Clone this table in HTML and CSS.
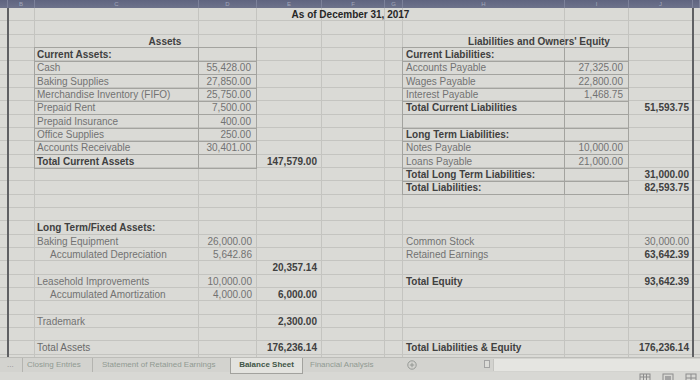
FILE: index.html
```html
<!DOCTYPE html>
<html>
<head>
<meta charset="utf-8">
<title>Balance Sheet</title>
<link rel="stylesheet" href="styles.css">
</head>
<body>
<div class="colhead">
  <span></span><span>B</span><span>C</span><span>D</span><span>E</span><span>F</span><span>G</span><span>H</span><span>I</span><span>J</span><span></span>
</div>
<div class="sheet">
  <div class="row"><div class="title">As of December 31, 2017</div></div>
  <div class="row"></div>
  <div class="row"><div class="lhead b">Assets</div><div class="rhead b">Liabilities and Owners' Equity</div></div>
  <div class="row">
    <div class="cC lab b bx bxl bxt">Current Assets:</div><div class="cD bx bxt"></div>
    <div class="cH rlab b bx bxl bxt">Current Liabilities:</div><div class="cI bx bxt"></div>
  </div>
  <div class="row">
    <div class="cC lab bx bxl">Cash</div><div class="cD num bx">55,428.00</div>
    <div class="cH rlab bx bxl">Accounts Payable</div><div class="cI num bx">27,325.00</div>
  </div>
  <div class="row">
    <div class="cC lab bx bxl">Baking Supplies</div><div class="cD num bx">27,850.00</div>
    <div class="cH rlab bx bxl">Wages Payable</div><div class="cI num bx">22,800.00</div>
  </div>
  <div class="row">
    <div class="cC lab bx bxl">Merchandise Inventory (FIFO)</div><div class="cD num bx">25,750.00</div>
    <div class="cH rlab bx bxl">Interest Payable</div><div class="cI num bx">1,468.75</div>
  </div>
  <div class="row">
    <div class="cC lab bx bxl">Prepaid Rent</div><div class="cD num bx">7,500.00</div>
    <div class="cH rlab b bx bxl">Total Current Liabilities</div><div class="cI bx"></div><div class="cJ num b">51,593.75</div>
  </div>
  <div class="row">
    <div class="cC lab bx bxl">Prepaid Insurance</div><div class="cD num bx">400.00</div>
    <div class="cH bx bxl"></div><div class="cI bx"></div>
  </div>
  <div class="row">
    <div class="cC lab bx bxl">Office Supplies</div><div class="cD num bx">250.00</div>
    <div class="cH rlab b bx bxl">Long Term Liabilities:</div><div class="cI bx"></div>
  </div>
  <div class="row">
    <div class="cC lab bx bxl">Accounts Receivable</div><div class="cD num bx">30,401.00</div>
    <div class="cH rlab bx bxl">Notes Payable</div><div class="cI num bx">10,000.00</div>
  </div>
  <div class="row">
    <div class="cC lab b bx bxl">Total Current Assets</div><div class="cD bx"></div><div class="cE num b">147,579.00</div>
    <div class="cH rlab bx bxl">Loans Payable</div><div class="cI num bx">21,000.00</div>
  </div>
  <div class="row">
    <div class="cH rlab b bx bxl">Total Long Term Liabilities:</div><div class="cI bx"></div><div class="cJ num b">31,000.00</div>
  </div>
  <div class="row">
    <div class="cH rlab b bx bxl">Total Liabilities:</div><div class="cI bx"></div><div class="cJ num b">82,593.75</div>
  </div>
  <div class="row"></div>
  <div class="row"></div>
  <div class="row"><div class="cC lab b">Long Term/Fixed Assets:</div></div>
  <div class="row">
    <div class="cC lab">Baking Equipment</div><div class="cD num">26,000.00</div>
    <div class="cH rlab">Common Stock</div><div class="cJ num">30,000.00</div>
  </div>
  <div class="row">
    <div class="cC lab ind">Accumulated Depreciation</div><div class="cD num">5,642.86</div>
    <div class="cH rlab">Retained Earnings</div><div class="cJ num b">63,642.39</div>
  </div>
  <div class="row"><div class="cE num b">20,357.14</div></div>
  <div class="row">
    <div class="cC lab">Leasehold Improvements</div><div class="cD num">10,000.00</div>
    <div class="cH rlab b">Total Equity</div><div class="cJ num b">93,642.39</div>
  </div>
  <div class="row">
    <div class="cC lab ind">Accumulated Amortization</div><div class="cD num">4,000.00</div><div class="cE num b">6,000.00</div>
  </div>
  <div class="row"></div>
  <div class="row"><div class="cC lab">Trademark</div><div class="cE num b">2,300.00</div></div>
  <div class="row"></div>
  <div class="row">
    <div class="cC lab tot">Total Assets</div><div class="cE num b">176,236.14</div>
    <div class="cH rlab b">Total Liabilities &amp; Equity</div><div class="cJ num b">176,236.14</div>
  </div>
  <div class="row"></div>
</div>
<div class="tabbar">
  <div class="more">...</div>
  <div class="tab t1">Closing Entries</div>
  <div class="tab t2">Statement of Retained Earnings</div>
  <div class="tab active">Balance Sheet</div>
  <div class="tab t4">Financial Analysis</div>
  <div class="add">
    <svg width="10" height="10" viewBox="0 0 10 10"><circle cx="5" cy="5" r="4.2" fill="none" stroke="#8f938f" stroke-width="0.9"/><path d="M5 2.8v4.4M2.8 5h4.4" stroke="#8f938f" stroke-width="0.9"/></svg>
  </div>
  <div class="sarrow"><span></span></div>
  <div class="track"></div>
</div>
<div class="status">
  <svg class="vicon" width="12" height="8" viewBox="0 0 12 8"><rect x="1" y="1" width="10" height="8" fill="none" stroke="#8c8c8c"/><path d="M1 4h10M4.5 1v7M7.5 1v7" stroke="#8c8c8c"/></svg>
  <svg class="vicon" width="12" height="8" viewBox="0 0 12 8"><rect x="1" y="1" width="10" height="8" fill="none" stroke="#8c8c8c"/><rect x="3" y="3" width="6" height="5" fill="#a4a4a4"/></svg>
  <svg class="vicon" width="12" height="8" viewBox="0 0 12 8"><rect x="1" y="1" width="10" height="8" fill="none" stroke="#8c8c8c"/><path d="M6 1v7M1 5h10" stroke="#8c8c8c"/></svg>
</div>
</body>
</html>
```
FILE: styles.css
```css
:root {
  --cols: 8px 27px 164px 58px 65px 63px 18px 162px 64px 64px 7px;
  --grid: #c4c4c0;
  --box: #a3a39f;
  --edge: #5f6063;
}

* { box-sizing: border-box; }

html, body { margin: 0; padding: 0; }

body {
  width: 700px;
  height: 380px;
  overflow: hidden;
  background: #dadad6;
  font-family: "Liberation Sans", Arial, sans-serif;
}

/* column header strip */
.colhead {
  display: grid;
  grid-template-columns: var(--cols);
  height: 8px;
  overflow: hidden;
  background: linear-gradient(#5f6480, #6d728b);
}
.colhead span {
  border-right: 1px solid #7c819a;
  color: #a2a7bb;
  font-size: 6px;
  line-height: 8px;
  text-align: center;
}

/* sheet grid */
.sheet {
  height: 349px;
  overflow: hidden;
  background-image:
    linear-gradient(to right,
      transparent 0 7px, var(--edge) 7px 9px,
      transparent 9px 34px, var(--grid) 34px 35px,
      transparent 35px 198px, var(--grid) 198px 199px,
      transparent 199px 256px, var(--grid) 256px 257px,
      transparent 257px 321px, var(--grid) 321px 322px,
      transparent 322px 384px, var(--grid) 384px 385px,
      transparent 385px 402px, var(--grid) 402px 403px,
      transparent 403px 564px, var(--grid) 564px 565px,
      transparent 565px 628px, var(--grid) 628px 629px,
      transparent 629px 692px, var(--edge) 692px 694px,
      transparent 694px),
    repeating-linear-gradient(to bottom,
      transparent 0 12.33px, var(--grid) 12.33px 13.33px);
}

.row {
  display: grid;
  grid-template-columns: var(--cols);
  height: 13.33px;
  font-size: 10px;
  line-height: 13px;
  color: #727272;
  white-space: nowrap;
}
.row > div { min-width: 0; }

.title {
  grid-column: 2 / 11;
  text-align: center;
  font-weight: bold;
  color: #262626;
}
.lhead { grid-column: 2 / 6; text-align: center; }
.rhead { grid-column: 7 / 11; text-align: center; }

.cC { grid-column: 3; }
.cD { grid-column: 4; }
.cE { grid-column: 5; }
.cH { grid-column: 8; }
.cI { grid-column: 9; }
.cJ { grid-column: 10; }

.lab { padding-left: 2px; }
.rlab { padding-left: 3px; }
.ind { padding-left: 15px; }
.num { text-align: right; padding-right: 5px; }
.cJ.num { padding-right: 4px; }

.b { font-weight: bold; color: #404040; }
.tot { color: #6a6a6a; }

/* darker table box lines */
.bx {
  border-right: 1px solid var(--box);
  border-bottom: 1px solid var(--box);
}
.bxl { box-shadow: -1px 0 0 var(--box); }
.bxt { box-shadow: 0 -1px 0 var(--box); }
.bxl.bxt { box-shadow: -1px 0 0 var(--box), 0 -1px 0 var(--box), -1px -1px 0 var(--box); }

/* sheet tabs */
.tabbar {
  display: flex;
  height: 15px;
  background: #d3d3cf;
  border-top: 1px solid #bdbdb9;
  font-size: 8px;
  line-height: 13px;
  color: #909a92;
  white-space: nowrap;
}
.more {
  width: 23px;
  padding-left: 7px;
  border-right: 1px solid #b4b4b0;
  color: #8e8e8e;
}
.tab { border-right: 1px solid #b4b4b0; }
.t1 { width: 70px; padding-left: 4px; }
.t2 { width: 137px; padding-left: 9px; border-right: none; }
.active {
  width: 73px;
  text-align: center;
  background: #e3e3df;
  border: 1px solid #a2a29e;
  border-top: none;
  height: 16px;
  font-weight: bold;
  color: #3f5546;
}
.t4 { width: 82px; padding-left: 7px; border-right: none; }
.add {
  width: 99px;
  padding-left: 22px;
  padding-top: 2px;
}
.add svg { display: block; }
.sarrow {
  width: 9px;
  padding-top: 2px;
}
.sarrow span {
  display: block;
  width: 6px;
  height: 8px;
  border: 1px solid #a3a3a3;
  background: #dcdcd8;
}
.track {
  flex: 1;
  margin: 1px 0 1px 0;
  background: #e5e5e1;
  border-left: 1px solid #c4c4c0;
}

/* status bar */
.status {
  display: flex;
  justify-content: flex-end;
  gap: 11px;
  height: 8px;
  padding-right: 3px;
  padding-top: 1px;
  background: #d8d8d4;
  overflow: hidden;
}
.vicon { display: block; }
```
